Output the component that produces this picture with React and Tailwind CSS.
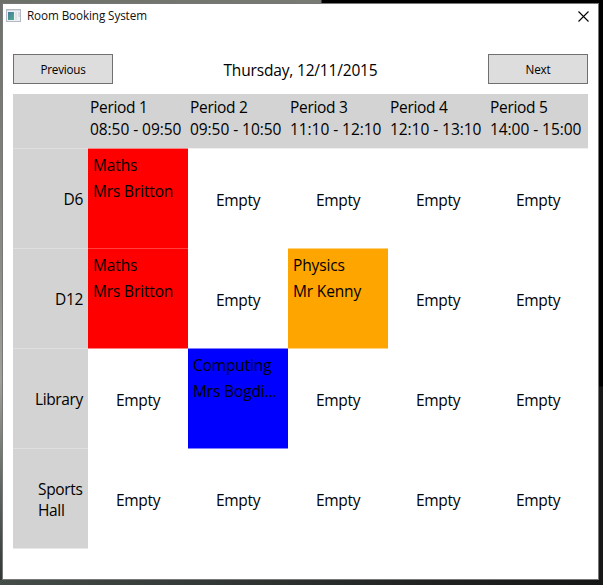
const PERIODS = [
  ['Period 1', '08:50 - 09:50'],
  ['Period 2', '09:50 - 10:50'],
  ['Period 3', '11:10 - 12:10'],
  ['Period 4', '12:10 - 13:10'],
  ['Period 5', '14:00 - 15:00'],
];

const EMPTY = 'border-white bg-white';

const ROWS = [
  {
    room: 'D6',
    cells: [
      { subject: 'Maths', teacher: 'Mrs Britton', style: 'border-[#f58787] bg-[#ff0000]' },
      { style: 'border-[#f0f0f0] bg-white' },
      { style: 'border-[#f0f0f0] bg-white' },
      { style: 'border-[#f0f0f0] bg-white' },
      { style: 'border-[#f0f0f0] bg-white' },
    ],
  },
  {
    room: 'D12',
    cells: [
      { subject: 'Maths', teacher: 'Mrs Britton', style: 'border-[#ff4040] bg-[#ff0000]' },
      { style: EMPTY },
      { subject: 'Physics', teacher: 'Mr Kenny', style: 'border-[#ffd280] bg-[#ffa500]' },
      { style: EMPTY },
      { style: EMPTY },
    ],
  },
  {
    room: 'Library',
    cells: [
      { style: 'border-[#ff8080] bg-white' },
      { subject: 'Computing', teacher: 'Mrs Bogdi...', style: 'border-[#8080ff] bg-[#0000ff]' },
      { style: 'border-[#ffd280] bg-white' },
      { style: EMPTY },
      { style: EMPTY },
    ],
  },
  {
    room: 'Sports Hall',
    cells: [
      { style: EMPTY },
      { style: 'border-[#8080ff] bg-white' },
      { style: EMPTY },
      { style: EMPTY },
      { style: EMPTY },
    ],
  },
];

function AppIcon() {
  return (
    <svg width="16" height="14" viewBox="0 0 16 14" shapeRendering="crispEdges">
      <defs>
        <linearGradient id="screen" x1="0" y1="0" x2="1" y2="1">
          <stop offset="0" stopColor="#4878a0" />
          <stop offset="1" stopColor="#4caf83" />
        </linearGradient>
      </defs>
      <rect x="0.5" y="0.5" width="14" height="12" fill="#edf0f5" stroke="#b4b8c0" />
      <rect x="1" y="1" width="13" height="1" fill="#d5dae2" />
      <rect x="2" y="3" width="6" height="8" fill="url(#screen)" />
      <rect x="9" y="3" width="2" height="8" fill="#e0e2e6" />
      <rect x="12" y="3" width="2" height="5" fill="#d8dbe0" />
    </svg>
  );
}

function Booking({ cell }) {
  if (!cell.subject) {
    return (
      <div className={`flex h-[100px] w-[100px] items-center justify-center border-t pt-[2px] tracking-[-0.3px] ${cell.style}`}>
        Empty
      </div>
    );
  }
  return (
    <div className={`h-[100px] w-[100px] border-t pt-[3px] pl-[5px] leading-[26px] whitespace-nowrap tracking-[-0.15px] ${cell.style}`}>
      <div>{cell.subject}</div>
      <div>{cell.teacher}</div>
    </div>
  );
}

export default function App() {
  return (
    <div className="h-[585px] w-[603px] overflow-hidden bg-[linear-gradient(#000_0_386px,#171815_387px)] font-['Open_Sans','Noto_Sans',sans-serif] text-[15.5px] leading-[22px] text-black">
      <div className="h-full bg-[linear-gradient(#6c706a,#8a8c85_45%,#a0a098_65%,#59625d_85%,#303632)] bg-[length:3px_100%] bg-no-repeat">
        <div className="h-full bg-[linear-gradient(90deg,#6b7068,#777b73_321px,#000_322px)] bg-[length:100%_3px] bg-no-repeat">
          <div className="h-full bg-[linear-gradient(90deg,#454d48,#343a37_200px,#202321_420px,#151716)] bg-[length:100%_5px] bg-bottom bg-no-repeat pt-[3px] pl-[2px]">
            <div className="h-[577px] w-[597px] border border-[#777] bg-white">
              <div className="flex h-[24px] items-center pr-[9px] pl-[3px]">
                <AppIcon />
                <h1 className="ml-[5px] grow pb-px text-[11.7px] leading-[21px] tracking-[-0.1px] text-[#111]">Room Booking System</h1>
                <svg width="11" height="11" viewBox="0 0 11 11" fill="none" stroke="#000" strokeWidth="1.1">
                  <path d="M.5.5l10 10M10.5.5l-10 10" />
                </svg>
              </div>
              <div className="mt-[26px] ml-[10px] flex w-[575px] items-center justify-between">
                <button className="h-[30px] w-[100px] border border-[#707070] bg-[#ddd] text-[11.7px] tracking-[-0.25px]">Previous</button>
                <div className="pt-px tracking-[-0.17px]">Thursday, 12/11/2015</div>
                <button className="h-[30px] w-[100px] border border-[#707070] bg-[#ddd] text-[11.7px] tracking-[-0.2px]">Next</button>
              </div>
              <div className="mt-[10px] ml-[10px] w-[575px]">
                <div className="flex h-[54px] bg-[#d3d3d3] pt-[2px] pl-[77px]">
                  {PERIODS.map(([name, time]) => (
                    <div key={name} className="w-[100px] shrink-0 whitespace-nowrap">
                      <div className="tracking-[-0.3px]">{name}</div>
                      <div className="tracking-[-0.06px]">{time}</div>
                    </div>
                  ))}
                </div>
                {ROWS.map((row) => (
                  <div key={row.room} className="flex">
                    <div className={`flex h-[100px] w-[75px] items-center justify-end border-t border-[#dedede] bg-[#d3d3d3] pr-[5px] leading-[21px] tracking-[-0.35px] ${row.room === 'Sports Hall' ? 'pt-[3px]' : 'pt-px'}`}>
                      <span className={row.room === 'Sports Hall' ? 'w-[45px]' : ''}>{row.room}</span>
                    </div>
                    {row.cells.map((cell, i) => (
                      <Booking key={i} cell={cell} />
                    ))}
                  </div>
                ))}
                <div className="h-px w-[75px] bg-[#e9e9e9]" />
              </div>
            </div>
          </div>
        </div>
      </div>
    </div>
  );
}
